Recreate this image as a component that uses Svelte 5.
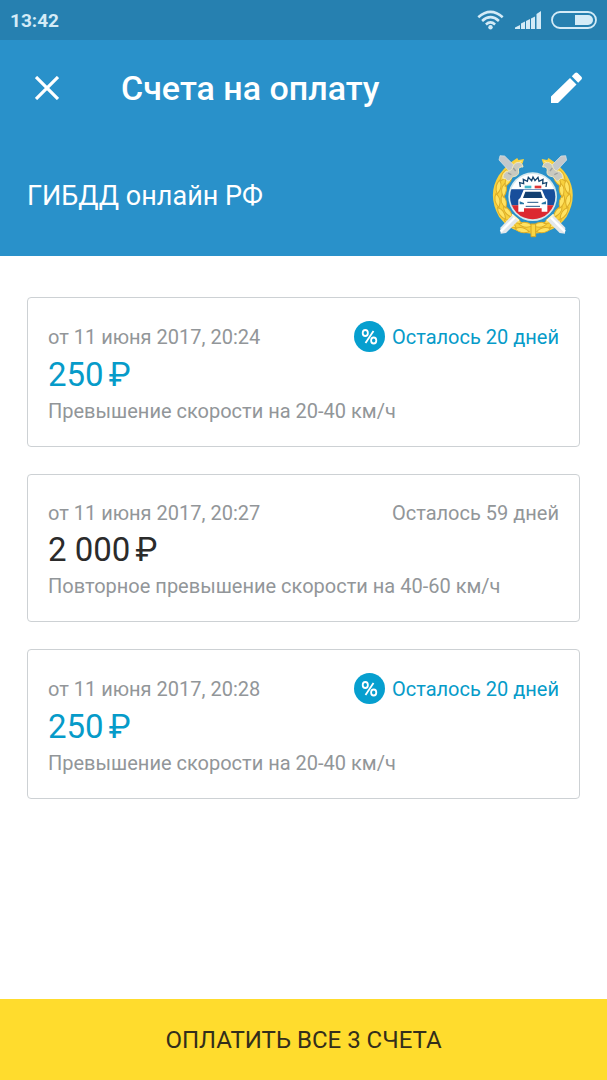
<script>
	const bills = [
		{ id: 1, date: "от 11 июня 2017, 20:24", amount: "250", reason: "Превышение скорости на 20-40 км/ч", left: "Осталось 20 дней", discount: true },
		{ id: 2, date: "от 11 июня 2017, 20:27", amount: "2 000", reason: "Повторное превышение скорости на 40-60 км/ч", left: "Осталось 59 дней", discount: false },
		{ id: 3, date: "от 11 июня 2017, 20:28", amount: "250", reason: "Превышение скорости на 20-40 км/ч", left: "Осталось 20 дней", discount: true }
	];

	// Wreath leaves, as angles from the bottom of the ring
	const leaves = [12, 34, 56, 78, 100, 122];
</script>

<div class="screen">
	<header>
		<div class="status">
			<span class="time">13:42</span>
			<svg class="wifi" viewBox="0 0 27 20" aria-hidden="true">
				<g fill="none" stroke="currentColor" stroke-width="2.6">
					<path d="M1.3 7.2Q13.5 -3.6 25.7 7.2" />
					<path d="M5.1 11Q13.5 3.4 21.9 11" />
					<path d="M8.9 14.4Q13.5 10.4 18.1 14.4" />
				</g>
				<circle cx="13.5" cy="17.2" r="2.2" fill="currentColor" />
			</svg>
			<svg class="signal" viewBox="0 0 26 18" aria-hidden="true">
				<path d="M0 18v-1.500l5-2.500v4zM6 18v-5.500l4-2V18zM11 18v-8l4-2v10zM16 18V7.500l4-2V18zM21.500 18V3L26 0v18z" fill="currentColor" />
			</svg>
			<svg class="battery" viewBox="0 0 46 18" aria-hidden="true">
				<rect x="1" y="1" width="44" height="16" rx="8" fill="none" stroke="currentColor" stroke-width="1.8" />
				<path d="M24 4h13a5 5 0 0 1 0 10H24z" fill="currentColor" />
			</svg>
		</div>

		<div class="bar">
			<button class="icon" aria-label="Закрыть">
				<svg width="24" height="24" viewBox="0 0 24 24">
					<path d="M1 1l22 22M23 1L1 23" fill="none" stroke="currentColor" stroke-width="3.2" />
				</svg>
			</button>
			<h1>Счета на оплату</h1>
			<button class="icon" aria-label="Изменить">
				<svg width="32" height="32" viewBox="0 0 32 32">
					<path d="M0 31v-6.500L19 6l6.500 6.500L7 31zM20.800 4.200L24 1q1.300-1.200 2.600 0l3.800 3.800q1.200 1.300 0 2.600l-3.200 3.300z" fill="currentColor" />
				</svg>
			</button>
		</div>

		<div class="payee">
			<h2>ГИБДД онлайн РФ</h2>
			<svg class="emblem" viewBox="0 0 300 300" aria-hidden="true">
				<defs>
					<clipPath id="disc"><circle cx="146" cy="152" r="68" /></clipPath>
					<g id="sword">
						<path d="M50 263l-1-18 37-39 18 17-38 38z" fill="#e3e7ea" />
						<path d="M50 257l44-44" stroke="#fff" stroke-width="7" />
						<path d="M84 205l21 19" stroke="#fff7cd" stroke-width="5" />
					</g>
					<g id="hilt">
						<path d="M45 42l3-13 14 1 31 31-16 16z" fill="#c3c8cc" stroke="#dfe5e7" stroke-width="2" />
						<path d="M58 98q-3-15 9-21 14-1 18-10 3-16 17-18 13 0 15 14-12-2-14 9 4 13-7 18-13 0-17 11-7 9-15-4z" fill="#c9c9bf" stroke="#efe7bd" stroke-width="3" />
						<path d="M72 81l10 5M88 66l7 9" stroke="#9b9f9d" stroke-width="4" fill="none" />
					</g>
					<g id="branch">
						<path d="M146 249Q88 248 57 205Q25 147 56 96Q72 70 107 48" fill="none" stroke="#f7d03d" stroke-width="28" />
						{#each leaves as angle}
							<g transform="rotate({angle} 146 151)" fill="#ffe362" stroke="#dcad28" stroke-width="3">
								<path d="M164 237q-24-12-42 3q19 14 42-3z" />
								<path d="M158 257q-24-15-43 0q19 14 43 0z" />
							</g>
						{/each}
						<path d="M75 70q10-28 45-31-5 25-32 39z" fill="#f9d441" />
						<path d="M82 67q13-14 31-22" fill="none" stroke="#ffe77a" stroke-width="4" />
					</g>
				</defs>
				<use href="#branch" />
				<use href="#branch" transform="matrix(-1 0 0 1 293 0)" />
				<path d="M141 234h14v38h-14z" fill="#f9d643" stroke="#d3a625" stroke-width="3" />
				<use href="#sword" />
				<use href="#sword" transform="matrix(-1 0 0 1 293 0)" />
				<use href="#hilt" />
				<use href="#hilt" transform="matrix(-1 0 0 1 293 0)" />
				<circle cx="146" cy="152" r="73" fill="#d7e9ed" />
				<g clip-path="url(#disc)">
					<path d="M76 82h140v48H76z" fill="#fff" />
					<path d="M76 130h140v48H76z" fill="#174e9b" />
					<path d="M76 178h140v48H76z" fill="#dc2830" />
				</g>
				<path d="M109 123l-2-13 12 3-1-13 12 6 3-12 10 10 4-11 6 11 9-10 3 12 12-6-1 13 12-3-2 13" fill="none" stroke="#16466f" stroke-width="4" />
				<path d="M122 119h20v8h-20z" fill="#43b6c9" />
				<path d="M152 119h20v8h-20z" fill="#df3636" />
				<path d="M119 131h55l10 24 6 6v36h-17v-10h-53v10h-17v-36l6-6z" fill="#fff" />
				<path d="M124 137h46l6 19h-59z" fill="#123f70" />
				<path d="M107 166l13 5v4h-13zM186 166l-13 5v4h13z" fill="#2877a6" />
				<path d="M130 169h33M125 181h43" stroke="#25598a" stroke-width="3" />
			</svg>
		</div>
	</header>

	<main>
		{#each bills as bill (bill.id)}
			<article class="bill" class:discount={bill.discount}>
				<div class="row">
					<span class="date">{bill.date}</span>
					<span class="left">
						{#if bill.discount}
							<svg width="31" height="31" viewBox="0 0 31 31" aria-hidden="true">
								<circle cx="15.5" cy="15.5" r="15.5" fill="#069fcf" />
								<g fill="none" stroke="#fff" stroke-width="1.8">
									<ellipse cx="11.300" cy="12" rx="2.600" ry="3" />
									<ellipse cx="19.700" cy="19.500" rx="2.600" ry="3" />
									<path d="M19.500 10L11.500 22" />
								</g>
							</svg>
						{/if}
						{bill.left}
					</span>
				</div>
				<div class="amount"><span>{bill.amount}</span><span>₽</span></div>
				<p class="reason">{bill.reason}</p>
			</article>
		{/each}
	</main>

	<button class="pay">ОПЛАТИТЬ ВСЕ 3 СЧЕТА</button>
</div>

<style>
	:global(body) {
		background: #fff;
	}

	.screen {
		display: flex;
		flex-direction: column;
		min-height: 100vh;
		font-family: Roboto, "Liberation Sans", sans-serif;
		color: #929699;
	}

	header {
		background: #2991ca;
		color: #fff;
	}

	.status {
		display: flex;
		align-items: center;
		height: 40px;
		padding: 0 10px;
		background: #2680b0;
		color: #d4ebf7;
	}

	.time {
		margin-right: auto;
		font-size: 19px;
		font-weight: 700;
	}

	.wifi {
		width: 27px;
		height: 20px;
	}

	.signal {
		width: 26px;
		height: 18px;
		margin: 0 10px 0 11px;
	}

	.battery {
		width: 46px;
		height: 18px;
	}

	.bar {
		display: flex;
		align-items: center;
		height: 96px;
		padding: 0 20px 0 27px;
	}

	.icon {
		display: flex;
		align-items: center;
		justify-content: center;
		width: 40px;
		height: 40px;
		padding: 0;
		border: 0;
		background: none;
		color: inherit;
	}

	h1 {
		flex: 1;
		margin: 0 0 0 54px;
		font-size: 34px;
		font-weight: 500;
		line-height: 42px;
	}

	.payee {
		display: flex;
		align-items: center;
		justify-content: space-between;
		height: 120px;
		padding: 0 23px 0 27px;
	}

	h2 {
		margin: 0;
		font-size: 27px;
		font-weight: 400;
	}

	.emblem {
		width: 100px;
		height: 100px;
	}

	main {
		flex: 1;
		display: flex;
		flex-direction: column;
		gap: 27px;
		padding: 41px 27px;
	}

	.bill {
		padding: 23px 20px 21px;
		border: 1px solid #cdd1d4;
		border-radius: 4px;
		font-size: 20px;
		line-height: 28px;
	}

	.row {
		display: flex;
		align-items: center;
		justify-content: space-between;
		min-height: 29px;
	}

	.left {
		display: flex;
		align-items: center;
		gap: 7px;
	}

	.amount {
		display: flex;
		gap: 5px;
		font-size: 33px;
		line-height: 45px;
		color: #2b2b2b;
	}

	.discount .left,
	.discount .amount {
		color: #069bc9;
	}

	.reason {
		margin: 0;
	}

	.pay {
		height: 81px;
		border: 0;
		background: #ffdc2d;
		color: #332e1b;
		font-family: inherit;
		font-size: 24px;
	}
</style>
